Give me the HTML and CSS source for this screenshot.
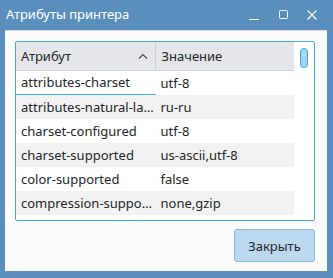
FILE: index.html
```html
<!DOCTYPE html>
<html lang="ru">
<head>
    <meta charset="UTF-8">
    <title>Атрибуты принтера</title>
    <link rel="stylesheet" href="styles.css">
</head>
<body>

<div class="window">
    <div class="titlebar">
        <span class="title">Атрибуты принтера</span>
        <div class="controls">
            <svg class="ctl" width="12" height="12" viewBox="0 0 12 12"><path d="M1 10.5H11" stroke="#fff" stroke-width="1"/></svg>
            <svg class="ctl" width="12" height="12" viewBox="0 0 12 12"><rect x="2.5" y="1.5" width="8" height="8" rx="1" fill="none" stroke="#fff" stroke-width="1"/></svg>
            <svg class="ctl" width="12" height="12" viewBox="0 0 12 12"><path d="M1.5 1.5L10.5 10.5M10.5 1.5L1.5 10.5" stroke="#fff" stroke-width="1.2"/></svg>
        </div>
    </div>

    <div class="client">
        <div class="table-frame">
            <div class="table">
                <div class="header">
                    <div class="hcell first">Атрибут <span class="sort">
                        <svg width="10" height="6" viewBox="0 0 10 6"><path d="M1 5.5L5 1.5L9 5.5" fill="none" stroke="#4d4d4d" stroke-width="1.1"/></svg>
                    </span></div>
                    <div class="hcell">Значение</div>
                </div>
                <div class="row current"><div class="cell">attributes-charset</div><div class="cell">utf-8</div></div>
                <div class="row alt"><div class="cell" title="attributes-natural-language">attributes-natural-la…</div><div class="cell">ru-ru</div></div>
                <div class="row"><div class="cell">charset-configured</div><div class="cell">utf-8</div></div>
                <div class="row alt"><div class="cell">charset-supported</div><div class="cell">us-ascii,utf-8</div></div>
                <div class="row"><div class="cell">color-supported</div><div class="cell">false</div></div>
                <div class="row alt"><div class="cell" title="compression-supported">compression-suppo…</div><div class="cell">none,gzip</div></div>
            </div>
            <div class="scrollbar">
                <div class="thumb"></div>
            </div>
        </div>

        <div class="buttons">
            <button class="btn">Закрыть</button>
        </div>
    </div>
</div>

</body>
</html>
```

FILE: styles.css
```css
/* Window */
body {
    margin: 0;
    padding: 0;
    font-family: 'Noto Sans', sans-serif;
    background: #5a8fbd;
}

.window {
    width: 333px;
    height: 278px;
    background: #5a8fbd;
    display: flex;
    flex-direction: column;
    box-sizing: border-box;
}

.titlebar {
    height: 30px;
    display: flex;
    align-items: center;
    padding-left: 6px;
    color: #fff;
    font-size: 13px;
}

.title {
    flex: 1;
    margin-top: -2px;
}

.controls {
    display: flex;
    gap: 17px;
    margin-right: 15px;
    margin-top: -1px;
}

.ctl {
    display: block;
}

.client {
    flex: 1;
    margin: 0 6px 7px 5px;
    background: #fcfcfc;
    border-top: 1px solid #dadcde;
    padding: 10px 12px 8px 10px;
    display: flex;
    flex-direction: column;
}

/* Table */
.table-frame {
    height: 180px;
    box-sizing: border-box;
    border: 1px solid #3daee9;
    border-radius: 2px;
    display: flex;
    background: #fff;
}

.table {
    width: 278px;
    font-size: 13px;
    color: #232629;
    overflow: hidden;
}

.header {
    display: flex;
    height: 29px;
    background: #e4e6e9;
    border-bottom: 1px solid #d1d3d6;
    box-sizing: border-box;
}

.hcell {
    display: flex;
    align-items: center;
    padding-left: 6px;
    width: 139px;
    box-sizing: border-box;
}

.hcell.first {
    width: 140px;
    border-right: 1px solid #cdd0d3;
    padding-left: 5px;
    justify-content: space-between;
    padding-right: 7px;
}

.sort svg {
    display: block;
}

.row {
    display: flex;
    height: 24px;
    align-items: center;
    background: #fff;
}

.row.alt {
    background: #f2f2f2;
}

.cell {
    width: 139px;
    box-sizing: border-box;
    padding-left: 5px;
    white-space: nowrap;
    height: 24px;
    line-height: 24px;
}

.cell:first-child {
    width: 140px;
}

.row.current .cell:first-child {
    border-bottom: 1px solid #3daee9;
    line-height: 23px;
}

.scrollbar {
    flex: 1;
    background: #fff;
}

.thumb {
    width: 6px;
    height: 18px;
    margin: 6px 0 0 6px;
    background: #a8d5f5;
    border: 1px solid #3daee9;
    border-radius: 4px;
}

/* Buttons */
.buttons {
    display: flex;
    justify-content: flex-end;
    margin-top: 8px;
}

.btn {
    width: 81px;
    height: 33px;
    background: #bcd9ef;
    border: 1px solid #8fb8d8;
    border-radius: 3px;
    font-family: 'Noto Sans', sans-serif;
    font-size: 13px;
    color: #232629;
    padding: 0;
}
```
